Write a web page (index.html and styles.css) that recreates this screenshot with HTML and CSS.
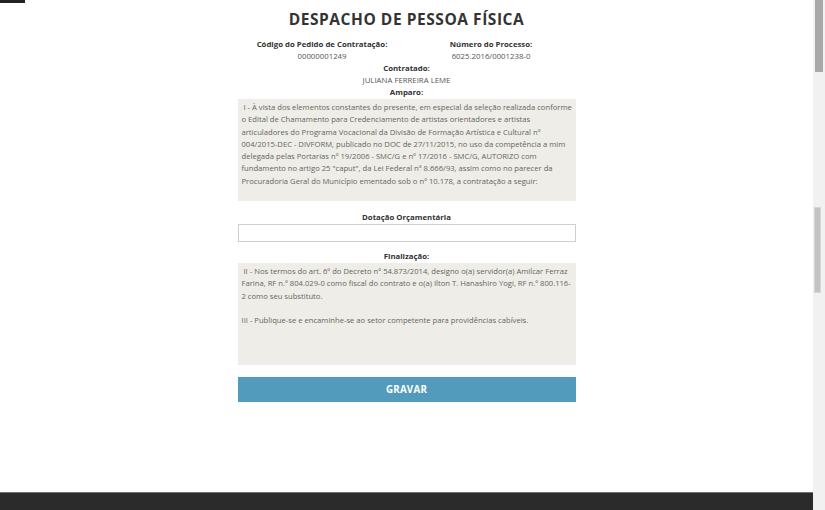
FILE: index.html
```html
<!DOCTYPE html>
<html lang="pt-BR">
<head>
<meta charset="utf-8">
<title>Despacho de Pessoa Física</title>
<link rel="stylesheet" href="styles.css">
</head>
<body>
<div class="window">
  <div class="page">
    <div class="stub"></div>
    <main class="content">
      <h1 class="title">DESPACHO DE PESSOA FÍSICA</h1>
      <div class="info-row">
        <div class="info-col">
          <div class="label">Código do Pedido de Contratação:</div>
          <div class="value">00000001249</div>
        </div>
        <div class="info-col">
          <div class="label">Número do Processo:</div>
          <div class="value">6025.2016/0001238-0</div>
        </div>
      </div>
      <div class="label">Contratado:</div>
      <div class="value">JULIANA FERREIRA LEME</div>
      <div class="label">Amparo:</div>
      <div class="textbox textbox-amparo">&nbsp;I - À vista dos elementos constantes do presente, em especial da seleção realizada conforme<br>o Edital de Chamamento para Credenciamento de artistas orientadores e artistas<br>articuladores do Programa Vocacional da Divisão de Formação Artística e Cultural nº<br>004/2015-DEC - DIVFORM, publicado no DOC de 27/11/2015, no uso da competência a mim<br>delegada pelas Portarias nº 19/2006 - SMC/G e nº 17/2016 - SMC/G, AUTORIZO com<br>fundamento no artigo 25 "caput", da Lei Federal nº 8.666/93, assim como no parecer da<br>Procuradoria Geral do Município ementado sob o nº 10.178, a contratação a seguir:</div>
      <div class="label label-dotacao">Dotação Orçamentária</div>
      <div class="input"></div>
      <div class="label label-final">Finalização:</div>
      <div class="textbox textbox-final">&nbsp;II - Nos termos do art. 6º do Decreto nº 54.873/2014, designo o(a) servidor(a) Amilcar Ferraz<br>Farina, RF n.º 804.029-0 como fiscal do contrato e o(a) Ilton T. Hanashiro Yogi, RF n.º 800.116-<br>2 como seu substituto.<br><br>III - Publique-se e encaminhe-se ao setor competente para providências cabíveis.</div>
      <button class="btn" type="button">GRAVAR</button>
    </main>
    <footer class="footer"></footer>
  </div>
  <div class="scrollbar">
    <div class="thumb-outer"></div>
    <div class="thumb-inner"></div>
  </div>
</div>
</body>
</html>
```
FILE: styles.css
```css
html, body {
  margin: 0;
  padding: 0;
  background: #ffffff;
}
body {
  font-family: "Open Sans", "Liberation Sans", sans-serif;
  color: #333333;
  overflow: hidden;
}
.window {
  display: flex;
  width: 825px;
  height: 510px;
}
.page {
  flex: 1;
  display: flex;
  flex-direction: column;
  min-width: 0;
}
.stub {
  width: 25px;
  height: 3px;
  background: #222222;
}
.content {
  flex: 1;
  width: 338px;
  margin: 0 auto;
  display: flex;
  flex-direction: column;
  align-items: stretch;
  text-align: center;
}
.title {
  margin: 6px 0 9px;
  font-family: "Open Sans", sans-serif;
  font-weight: 700;
  font-size: 15.5px;
  line-height: 20px;
  letter-spacing: 0.55px;
  color: #333333;
  white-space: nowrap;
}
.info-row {
  display: flex;
}
.info-col {
  flex: 1;
}
.label {
  font-size: 7.8px;
  font-weight: 700;
  line-height: 12px;
  color: #333333;
  white-space: nowrap;
}
.value {
  font-size: 7.8px;
  line-height: 12px;
  color: #555555;
  white-space: nowrap;
}
.textbox {
  margin-top: 1px;
  background: #eeede7;
  text-align: left;
  font-size: 7.65px;
  line-height: 12.25px;
  color: #666666;
  padding: 2px 4px 0;
  box-sizing: border-box;
  white-space: nowrap;
}
.textbox-amparo {
  height: 102px;
}
.label-dotacao {
  margin-top: 10px;
}
.input {
  margin-top: 1px;
  height: 18px;
  box-sizing: border-box;
  border: 1px solid #cfcfcf;
  background: #ffffff;
}
.label-final {
  margin-top: 8px;
}
.textbox-final {
  height: 102px;
}
.btn {
  margin-top: 12px;
  height: 25px;
  border: 0;
  padding: 0;
  background: #529bbd;
  color: #ffffff;
  font-family: "Open Sans", sans-serif;
  font-weight: 700;
  font-size: 9.8px;
  letter-spacing: 0.2px;
}
.footer {
  height: 18px;
  background: #2b2b2b;
  border-top: 1px solid #6f6f6f;
  box-sizing: border-box;
}
.scrollbar {
  width: 12px;
  background: #f1f1f1;
  display: flex;
  flex-direction: column;
}
.thumb-outer {
  height: 72px;
  width: 8px;
  margin-left: 2px;
  background: #a9a9a9;
}
.thumb-inner {
  margin-top: 135px;
  margin-left: 1px;
  height: 86px;
  width: 7px;
  background: #c3c3c3;
  border: 1px solid #d6d6d6;
  box-sizing: border-box;
}
```
